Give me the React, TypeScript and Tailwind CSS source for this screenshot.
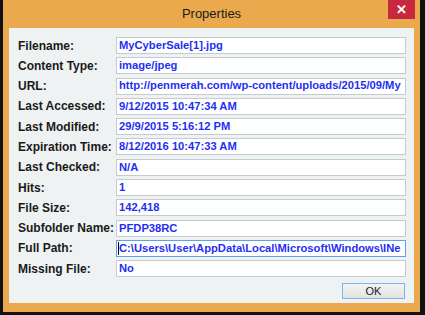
import React from "react";

const rows: { label: string; value: string; focused?: boolean }[] = [
  { label: "Filename:", value: "MyCyberSale[1].jpg" },
  { label: "Content Type:", value: "image/jpeg" },
  { label: "URL:", value: "http://penmerah.com/wp-content/uploads/2015/09/My" },
  { label: "Last Accessed:", value: "9/12/2015 10:47:34 AM" },
  { label: "Last Modified:", value: "29/9/2015 5:16:12 PM" },
  { label: "Expiration Time:", value: "8/12/2016 10:47:33 AM" },
  { label: "Last Checked:", value: "N/A" },
  { label: "Hits:", value: "1" },
  { label: "File Size:", value: "142,418" },
  { label: "Subfolder Name:", value: "PFDP38RC" },
  {
    label: "Full Path:",
    value: "C:\\Users\\User\\AppData\\Local\\Microsoft\\Windows\\INe",
    focused: true,
  },
  { label: "Missing File:", value: "No" },
];

const App = () => {
  return (
    <div className="w-[425px] h-[315px] bg-[#111111] pl-[3px] pr-[5px] pb-[3px] font-['Liberation_Sans',sans-serif]">
      {/* window frame */}
      <div className="relative w-full h-full bg-[#eaa94c] flex flex-col">
        {/* title bar */}
        <div className="h-[28px] flex items-center justify-center text-[13px] text-[#1b1b1b] pb-[1px]">
          Properties
        </div>
        <div className="absolute top-0 right-[5px] w-[27px] h-[19px] bg-[#c8283f] flex items-center justify-center text-white text-[13px] font-bold leading-none">
          ✕
        </div>
        {/* body */}
        <div className="mx-[6px] mb-[9px] flex-1 bg-[#eff2f2] flex flex-col pt-[9px] pr-[8px]">
          <div className="grid grid-cols-[107px_1fr] gap-y-[3.3px]">
            {rows.map((row) => (
              <React.Fragment key={row.label}>
                <div className="pl-[9px] h-[17px] flex items-center text-[12px] font-bold text-[#1a1a1a] whitespace-nowrap">
                  {row.label}
                </div>
                <div
                  className={
                    row.focused
                      ? "h-[17px] bg-white border border-[#5da2e6] flex items-center pl-[1px] overflow-hidden"
                      : "h-[17px] bg-white border border-[#c3cbce] flex items-center pl-[2px] overflow-hidden"
                  }
                >
                  {row.focused && <span className="w-[1px] h-[13px] bg-black shrink-0" />}
                  <span className="text-[11.2px] font-bold text-[#1f2ff2] whitespace-nowrap leading-none">
                    {row.value}
                  </span>
                </div>
              </React.Fragment>
            ))}
          </div>
          <div className="flex-1 flex items-end justify-end pb-[4px]">
            <div className="w-[63px] h-[16px] border border-[#7db4ea] bg-gradient-to-b from-[#f4f4f4] to-[#e3e3e3] flex items-center justify-center text-[11px] text-[#1b1b1b] mr-[1px]">
              OK
            </div>
          </div>
        </div>
      </div>
    </div>
  );
};

export default App;
